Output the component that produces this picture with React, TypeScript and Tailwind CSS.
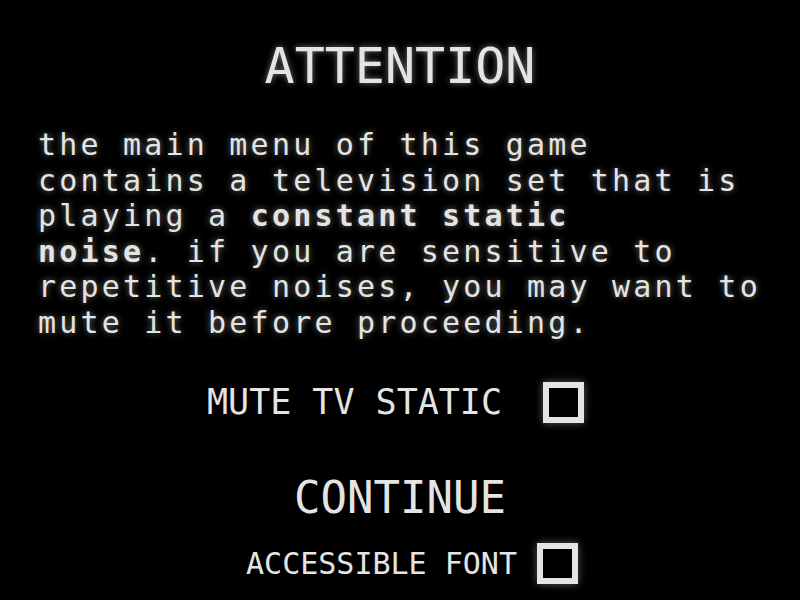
import React from 'react';

const glow = '[text-shadow:0_0_6px_rgba(255,255,255,0.45)]';

const Checkbox: React.FC<{ checked?: boolean }> = ({ checked }) => (
  <div className="w-[41px] h-[41px] border-[6px] border-[#e4e4e4] bg-black shadow-[0_0_8px_rgba(255,255,255,0.35)] flex items-center justify-center">
    {checked && <div className="w-[17px] h-[17px] bg-[#e4e4e4]" />}
  </div>
);

const App: React.FC = () => {
  const [muted, setMuted] = React.useState(false);
  const [accessible, setAccessible] = React.useState(false);

  return (
    <div
      className={`w-[800px] h-[600px] bg-black text-[#e4e4e4] overflow-hidden flex flex-col ${glow}`}
      style={{ fontFamily: '"DejaVu Sans Mono", "Liberation Mono", monospace' }}
    >
      <h1 className="pt-[36px] text-center text-[50px] leading-[60px] font-normal">ATTENTION</h1>

      {/* warning copy, broken by hand so the bold words land where they should */}
      <p className="mt-[31px] px-[38px] text-[30px] leading-[35.5px] tracking-[3.2px] whitespace-nowrap">
        the main menu of this game
        <br />
        contains a television set that is
        <br />
        playing a <b>constant static</b>
        <br />
        <b>noise</b>. if you are sensitive to
        <br />
        repetitive noises, you may want to
        <br />
        mute it before proceeding.
      </p>

      <button
        className="mt-[42px] h-[41px] flex items-center justify-center gap-[41px] pr-[9px] cursor-pointer"
        onClick={() => setMuted(!muted)}
      >
        <span className="text-[35px] leading-[41px]">MUTE TV STATIC</span>
        <Checkbox checked={muted} />
      </button>

      <button className="mt-[50px] h-[50px] text-center text-[44px] leading-[50px] cursor-pointer">CONTINUE</button>

      <button
        className="mt-[20px] h-[41px] flex items-center justify-center gap-[20px] pl-[24px] cursor-pointer"
        onClick={() => setAccessible(!accessible)}
      >
        <span className="text-[30px] leading-[41px]">ACCESSIBLE FONT</span>
        <Checkbox checked={accessible} />
      </button>
    </div>
  );
};

export default App;
